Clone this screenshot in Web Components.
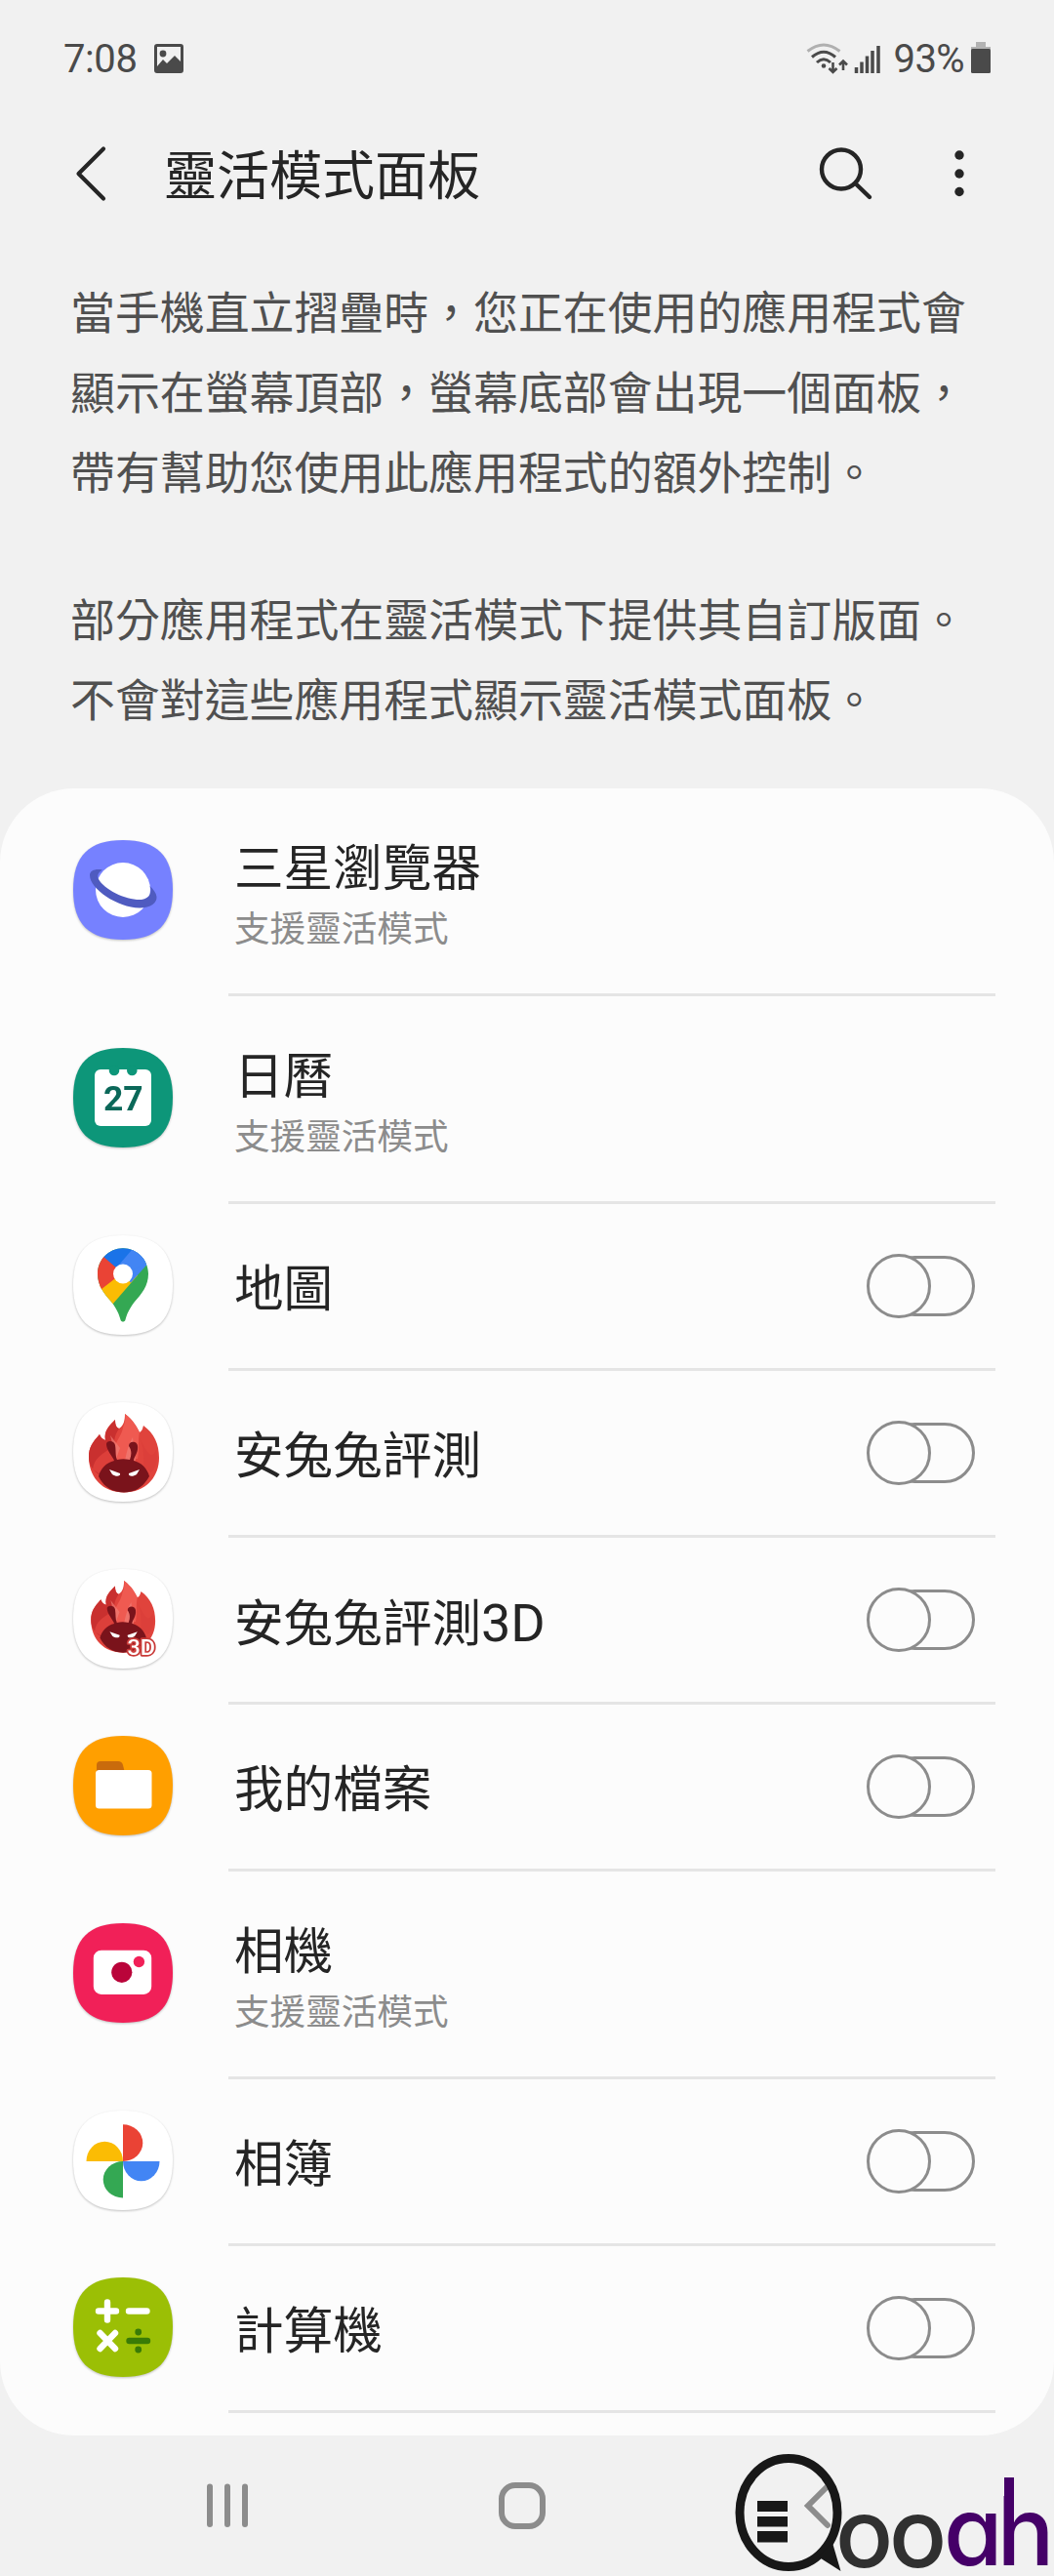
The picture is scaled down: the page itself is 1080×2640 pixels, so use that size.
<!DOCTYPE html>
<html lang="zh-Hant-TW">
<head>
<meta charset="utf-8">
<title>靈活模式面板</title>
<style>
    body {
        margin: 0;
        background-color: #f1f1f1;
        font-family: Roboto, "Noto Sans CJK TC", sans-serif;
        color: #252525;
    }
    .latin {
        font-size: 54px;
    }
</style>
</head>
<body>
<settings-screen>
    <status-bar slot="top" time="7:08" battery="93%"></status-bar>
    <title-bar slot="top">靈活模式面板</title-bar>
    <info-text slot="top">
        <p>當手機直立摺疊時，您正在使用的應用程式會<br>顯示在螢幕頂部，螢幕底部會出現一個面板，<br>帶有幫助您使用此應用程式的額外控制。</p>
        <p>部分應用程式在靈活模式下提供其自訂版面。<br>不會對這些應用程式顯示靈活模式面板。</p>
    </info-text>

    <app-row icon="internet" note="支援靈活模式">三星瀏覽器</app-row>
    <app-row icon="calendar" note="支援靈活模式">日曆</app-row>
    <app-row icon="maps">地圖</app-row>
    <app-row icon="antutu">安兔兔評測</app-row>
    <app-row icon="antutu3d">安兔兔評測<span class="latin">3D</span></app-row>
    <app-row icon="files">我的檔案</app-row>
    <app-row icon="camera" note="支援靈活模式">相機</app-row>
    <app-row icon="photos">相簿</app-row>
    <app-row icon="calculator">計算機</app-row>

    <nav-bar slot="bottom"></nav-bar>
</settings-screen>

<script>
function attach(element, html) {
    const template = document.createElement('template');
    template.innerHTML = html;
    element.attachShadow({mode: 'open'});
    element.shadowRoot.appendChild(template.content.cloneNode(true));
}

class SettingsScreen extends HTMLElement {
    constructor() {
        super();
        attach(this, `
            <style>
                :host {
                    display: flex;
                    flex-direction: column;
                    width: 1080px;
                    height: 2640px;
                    overflow: hidden;
                }
                header {
                    height: 808px;
                }
                main {
                    box-sizing: border-box;
                    height: 1688px;
                    border-radius: 76px;
                    background-color: #fcfcfc;
                }
            </style>
            <header><slot name="top"></slot></header>
            <main><slot></slot></main>
            <slot name="bottom"></slot>
        `);
    }
}

class StatusBar extends HTMLElement {
    constructor() {
        super();
        attach(this, `
            <style>
                :host {
                    display: flex;
                    align-items: center;
                    box-sizing: border-box;
                    height: 120px;
                    padding: 0 65px 0 65px;
                    font-size: 40px;
                    line-height: 48px;
                    color: #4a4a4a;
                }
                .time, .percent { padding-top: 2px; }
                .time { letter-spacing: -0.4px; }
                .picture { margin-left: 17px; }
                .network { margin-left: auto; }
                .battery { margin-left: 7px; }
                .percent { margin-left: 12px; letter-spacing: -0.6px; }
            </style>
            <span class="time"></span>
            <svg class="picture" width="30" height="30" viewBox="0 0 30 30">
                <path fill="#4a4a4a" fill-rule="evenodd" d="M3 0H27Q30 0 30 3V27Q30 30 27 30H3Q0 30 0 27V3Q0 0 3 0ZM3 3V23L9 16L13 20L21 12L27 18V3Z"/>
                <circle cx="9" cy="10" r="3.4" fill="#4a4a4a"/>
            </svg>
            <svg class="network" width="78" height="34" viewBox="827 42 78 34" fill="none" stroke="#4a4a4a">
                <path d="M828.5 51.5Q845 38.500 861.500 51.500" stroke="#b0b0b0" stroke-width="3"/>
                <path d="M833 57.500Q845 47 857 57.500M838 63Q845 56.500 852 63" stroke-width="3"/>
                <circle cx="845" cy="66.500" r="2.300" fill="#4a4a4a" stroke="none"/>
                <path d="M854.500 63V72M850.500 69L854.500 73L858.500 69M865 71V61.500M861 65.500L865 61.500L869 65.500" stroke-width="2.600"/>
                <path d="M878.500 68V74M884 62.500V74M889.500 56.500V74M895 51V74M901 46V74" stroke-width="3.500"/>
            </svg>
            <span class="percent"></span>
            <svg class="battery" width="20" height="34" viewBox="0 0 20 34">
                <path d="M5 0H15V5H20V10H0V5H5Z" fill="#b3b3b3"/>
                <rect y="7" width="20" height="25" rx="1.500" fill="#4a4a4a"/>
            </svg>
        `);
        this.shadowRoot.querySelector('.time').textContent = this.getAttribute('time');
        this.shadowRoot.querySelector('.percent').textContent = this.getAttribute('battery');
    }
}

class TitleBar extends HTMLElement {
    constructor() {
        super();
        attach(this, `
            <style>
                :host {
                    display: flex;
                    align-items: center;
                    box-sizing: border-box;
                    height: 116px;
                    padding: 0 90px 0 76px;
                }
                h1 {
                    flex: 1;
                    margin: 0 0 0 56px;
                    padding-top: 7px;
                    font-size: 54px;
                    font-weight: 400;
                    line-height: 80px;
                }
                .more { margin-left: 80px; }
            </style>
            <svg width="36" height="60" viewBox="76 148 36 60">
                <path d="M106 152.500L80.500 178L106 203.500" fill="none" stroke="#252525" stroke-width="4.200" stroke-linecap="round" stroke-linejoin="round"/>
            </svg>
            <h1><slot></slot></h1>
            <svg width="58" height="60" viewBox="838 148 58 60" fill="none" stroke="#252525" stroke-width="4.400" stroke-linecap="round">
                <circle cx="862" cy="173.500" r="20"/>
                <path d="M876.500 188L891 202"/>
            </svg>
            <svg class="more" width="14" height="60" viewBox="976 148 14 60" fill="#252525">
                <circle cx="983" cy="159" r="4.700"/>
                <circle cx="983" cy="178" r="4.700"/>
                <circle cx="983" cy="196.500" r="4.700"/>
            </svg>
        `);
    }
}

class InfoText extends HTMLElement {
    constructor() {
        super();
        attach(this, `
            <style>
                :host {
                    display: block;
                    padding: 44px 60px 0 72px;
                    font-size: 45.9px;
                    line-height: 82px;
                    color: #505050;
                    white-space: nowrap;
                }
                ::slotted(p) {
                    margin: 0 0 69px;
                }
            </style>
            <slot></slot>
        `);
    }
}

const SQUIRCLE = 'M51 0C86 0 102 16 102 51S86 102 51 102 0 86 0 51 16 0 51 0Z';

const RABBIT = `
    <path fill="#e0433c" d="M16 56C16 46 20 41 27 33C28 36 30 38 33 39C31 29 38 23 43 18C43 23 44 26 47 27C52 24 53 18 53 12C62 19 65 25 68 31C71 29 71 27 72 24C83 32 88 43 88 57C88 78 73 92.500 52 92.500S16 78 16 56Z"/>
    <path fill="#c9302f" d="M16 56C16 46 20 41 27 33C28 36 30 38 33 39C31 29 38 23 43 18C43 23 44 26 47 27C42 34 41 42 43 50L31 74L26 74C18 68 16 62 16 56Z"/>
    <path fill="#ef5a51" d="M53 12C62 19 65 25 68 31C66 38 68 48 66 58L42 60C39 42 49 38 51 26C53 21 54 17 53 12Z"/>
    <path fill="#dc3f3a" d="M20 69C22 56 30 54 38 47L41 61L28 74ZM68 37C73 46 72 58 72 66L80 72C86 66 87 57 85 49C80 60 76 52 68 37Z"/>
    <path fill="#f07d76" opacity=".7" d="M38 34L48 47L44 58ZM53 60C55 50 57 43 61 36L64 60Z"/>
    <path fill="#7a131b" d="M26 76C28 68 34 62 42 60C40 55 34 49 34 43C34 39 42 39 43 44C44 50 43 55 45 59Q51 57.500 58 59C60 54 60 49 57 45C57 39 66 40 66 45C67 52 62 56 62 60C70 62 76 68 78 76C72 87 63 92.500 52 92.500S31 87 26 76Z"/>
    <path fill="#fff" d="M37 69L48 73C49 76 44 77 40 74ZM68 69L57 73C56 76 61 77 65 74Z"/>
`;

const APP_ICONS = {
    internet: `
        <path fill="#7681ff" d="${SQUIRCLE}"/>
        <circle cx="51" cy="51" r="28" fill="#fff"/>
        <path fill="#4f5bc0" d="M17 36C17 50 45 69 68 69.500C80 69.500 86 64 85.500 58C85 54 82 50 78.500 47C81 52 79 60 70 61C55 62 32 51 26 40C24 36 26 33 30 30.500C23 29 17 31 17 36Z"/>`,
    calendar: `
        <path fill="#0d9679" d="${SQUIRCLE}"/>
        <rect x="22" y="22" width="58" height="58" rx="6" fill="#fff"/>
        <circle cx="42" cy="23" r="5.300" fill="#0d9679"/>
        <circle cx="60.300" cy="23" r="5.300" fill="#0d9679"/>
        <text x="51.300" y="63.800" text-anchor="middle" font-family="Roboto" font-weight="700" font-size="35.500" fill="#0b6859">27</text>`,
    maps: `
        <clipPath id="pin"><path d="M51 13.300C65.400 13.300 77 25 77 39.500C77 52 70 60 63 68C57 76 55 81 53.500 86.500C52.800 89.300 49.200 89.300 48.500 86.500C47 81 45 76 39 68C32 60 25 52 25 39.500C25 25 36.600 13.300 51 13.300Z"/></clipPath>
        <path fill="#fff" d="${SQUIRCLE}"/>
        <g clip-path="url(#pin)">
            <rect width="102" height="102" fill="#34a853"/>
            <path fill="#fbbc04" d="M20 59L51 25L66 41L34 78Z"/>
            <path fill="#ea4335" d="M24 15L51 38L20 62Z"/>
            <path fill="#4285f4" d="M60 14L51 40L59 48.500L82 23Z"/>
            <path fill="#1a73e8" d="M24 16L45 34L66 10L40 6Z"/>
            <path fill="#4285f4" d="M66 8L42 36L51 42L82 23Z"/>
        </g>
        <circle cx="51" cy="39.500" r="10" fill="#fff"/>`,
    antutu: `
        <path fill="#fff" d="${SQUIRCLE}"/>
        ${RABBIT}`,
    antutu3d: `
        <path fill="#fff" d="${SQUIRCLE}"/>
        <g transform="translate(3.600 1) scale(.915)">${RABBIT}</g>
        <text x="55.500" y="88" textLength="28.500" lengthAdjust="spacingAndGlyphs" font-family="Roboto" font-weight="500" font-size="22" fill="#fff" stroke="#c93a38" stroke-width="3.400" stroke-linejoin="round" paint-order="stroke">3D</text>`,
    files: `
        <path fill="#ff9f00" d="${SQUIRCLE}"/>
        <path fill="#c96b0c" d="M24 40V30Q24 26 28 26H46Q50 26 51 30L52.500 36V40Z"/>
        <rect x="23" y="35" width="57.500" height="39.500" rx="3.500" fill="#fff"/>`,
    camera: `
        <path fill="#f12058" d="${SQUIRCLE}"/>
        <rect x="20.800" y="27.700" width="59.400" height="45.200" rx="8" fill="#fff"/>
        <circle cx="49.800" cy="50.300" r="10.600" fill="#ba043a"/>
        <circle cx="67.400" cy="39.500" r="5.700" fill="#f12058"/>`,
    photos: `
        <path fill="#fff" d="${SQUIRCLE}"/>
        <path fill="#ea4335" d="M51 14.300A20.300 18.850 0 0 1 51 52Z"/>
        <path fill="#4285f4" d="M51 52H88.500A18.750 20.300 0 0 1 51 52Z"/>
        <path fill="#34a853" d="M51 52V89.500A20.300 18.750 0 0 1 51 52Z"/>
        <path fill="#fbbc04" d="M51 52H13.500A18.750 20.300 0 0 1 51 52Z"/>`,
    calculator: `
        <path fill="#9bbf05" d="${SQUIRCLE}"/>
        <path d="M26 34.500H44M35 25.500V43.500M57 34.500H75.500M27.500 57L43 73M43 57L27.500 73" stroke="#fff" stroke-width="6.400" stroke-linecap="round"/>
        <path d="M57.500 65H76" stroke="#397b06" stroke-width="6.400" stroke-linecap="round"/>
        <circle cx="66.700" cy="56" r="3.400" fill="#397b06"/>
        <circle cx="66.700" cy="74" r="3.400" fill="#397b06"/>`
};

class AppIcon extends HTMLElement {
    constructor() {
        super();
        attach(this, `
            <style>
                :host {
                    display: block;
                    width: 102px;
                    height: 102px;
                }
                svg {
                    display: block;
                    overflow: visible;
                    filter: drop-shadow(0 1px 1px rgba(0,0,0,0.24));
                }
            </style>
            <svg width="102" height="102" viewBox="0 0 102 102"></svg>
        `);
    }

    static get observedAttributes() {
        return ['name'];
    }

    attributeChangedCallback(attribute, oldValue, value) {
        this.shadowRoot.querySelector('svg').innerHTML = APP_ICONS[value] || '';
    }
}

class ToggleSwitch extends HTMLElement {
    constructor() {
        super();
        attach(this, `
            <style>
                :host {
                    display: block;
                    width: 111px;
                    height: 66px;
                }
                svg { display: block; }
            </style>
            <svg width="111" height="66" viewBox="0 0 111 66" fill="#fcfcfc" stroke="#8c8c8c" stroke-width="3">
                <rect x="20" y="3.500" width="89.500" height="59" rx="29.500"/>
                <circle cx="33" cy="33" r="31.500"/>
            </svg>
        `);
    }
}

class AppRow extends HTMLElement {
    constructor() {
        super();
        attach(this, `
            <style>
                :host {
                    display: grid;
                    grid-template-columns: 102px 1fr auto;
                    column-gap: 63px;
                    box-sizing: border-box;
                    height: 171px;
                    padding: 0 81px 0 75px;
                    /* divider starts just before the label */
                    background: linear-gradient(#e5e5e5, #e5e5e5) 234px 100% / 786px 3px no-repeat;
                }
                :host([note]) { height: 213px; }
                app-icon { margin-top: 32px; }
                :host([note]) app-icon { margin-top: 53px; }
                toggle-switch { margin-top: 51px; }
                .label {
                    padding-top: 56px;
                    font-size: 50.6px;
                    line-height: 64px;
                    white-space: nowrap;
                }
                :host([note]) .label { padding-top: 51px; }
                .note {
                    font-size: 36.6px;
                    line-height: 60px;
                    color: #8c8c8c;
                }
            </style>
            <app-icon></app-icon>
            <div class="label"><slot></slot></div>
        `);
        this.shadowRoot.querySelector('app-icon').setAttribute('name', this.getAttribute('icon'));

        if (this.hasAttribute('note')) {
            const note = document.createElement('div');
            note.className = 'note';
            note.textContent = this.getAttribute('note');
            this.shadowRoot.querySelector('.label').appendChild(note);
        } else {
            this.shadowRoot.appendChild(document.createElement('toggle-switch'));
        }
    }
}

class QooahLogo extends HTMLElement {
    constructor() {
        super();
        attach(this, `
            <style>
                :host {
                    position: absolute;
                    right: 0;
                    bottom: 0;
                }
                svg { display: block; }
                text {
                    font-family: Inter, sans-serif;
                    font-size: 98px;
                    font-weight: 500;
                    font-feature-settings: "cv11";
                }
            </style>
            <svg width="330" height="130" viewBox="750 2510 330 130">
                <ellipse cx="808" cy="2575" rx="50" ry="55.500" fill="none" stroke="#181818" stroke-width="9"/>
                <path fill="#181818" d="M853 2606L861.500 2635L838 2620Z"/>
                <path fill="#181818" d="M776 2563H807V2574H776ZM776 2579H807V2589.500H776ZM776 2594H807V2605.500H776Z"/>
                <text x="856 911" y="2630.500" fill="#303030">oo</text>
                <text x="967 1021.500" y="2629" fill="#450068">ah</text>
                <!-- taller stem for the h -->
                <rect x="1029" y="2539" width="10" height="60" fill="#450068"/>
            </svg>
        `);
    }
}

class NavBar extends HTMLElement {
    constructor() {
        super();
        attach(this, `
            <style>
                :host {
                    position: relative;
                    display: flex;
                    justify-content: space-between;
                    align-items: center;
                    box-sizing: border-box;
                    height: 144px;
                    padding: 0 228px 0 208px;
                }
                .home { margin-right: 10px; }
            </style>
            <svg width="50" height="50" viewBox="208 2543 50 50" stroke="#8c8c8c" stroke-width="6" stroke-linecap="round">
                <path d="M215 2548.500V2587M233 2548.500V2587M251 2548.500V2587"/>
            </svg>
            <svg class="home" width="50" height="50" viewBox="510 2543 50 50" fill="none" stroke="#8c8c8c" stroke-width="6">
                <rect x="514" y="2547" width="42" height="42" rx="14"/>
            </svg>
            <svg width="30" height="50" viewBox="822 2543 30 50" fill="none" stroke="#8c8c8c" stroke-width="6" stroke-linecap="round">
                <path d="M848 2548L828 2568L848 2588"/>
            </svg>
            <qooah-logo></qooah-logo>
        `);
    }
}

customElements.define('settings-screen', SettingsScreen);
customElements.define('status-bar', StatusBar);
customElements.define('title-bar', TitleBar);
customElements.define('info-text', InfoText);
customElements.define('app-icon', AppIcon);
customElements.define('toggle-switch', ToggleSwitch);
customElements.define('app-row', AppRow);
customElements.define('qooah-logo', QooahLogo);
customElements.define('nav-bar', NavBar);
</script>
</body>
</html>
